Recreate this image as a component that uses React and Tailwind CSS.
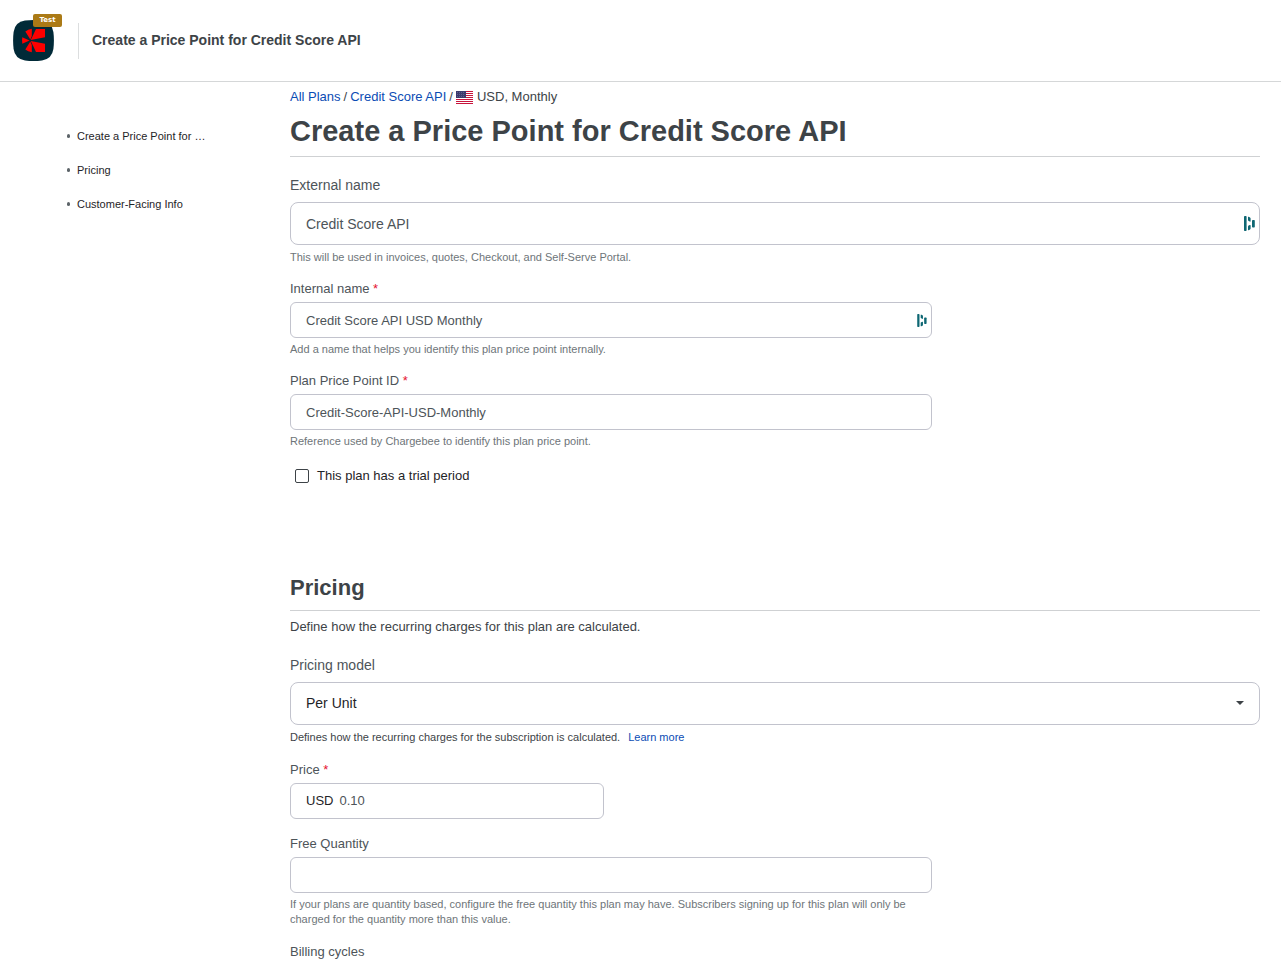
import { useState } from "react";

const NAV_ITEMS = [
  { href: "#details", label: "Create a Price Point for …" },
  { href: "#pricing", label: "Pricing" },
  { href: "#customer-info", label: "Customer-Facing Info" },
];

function Logo() {
  return (
    <svg className="w-[41px] h-[41px]" viewBox="0 0 41 41" aria-hidden="true">
      <path
        d="M12 .6Q20.500-.4 29 .6 39 2 40.400 12 41.400 20.500 40.400 29 39 39 29 40.400 20.500 41.400 12 40.400 2 39 .6 29-.4 20.500.6 12 2 2 12 .6Z"
        fill="#012a38"
      />
      <g fill="#ff0000">
        <path d="M23 9h9v8.300L17.800 20Z" />
        <path d="M23 32h9v-8.300L17.800 21Z" />
        <path d="M18.800 8.800V16L17.300 19.500 12.300 11.500Q15 9.300 18.800 8.800Z" />
        <path d="M18.800 32.200V25L17.300 21.500 12.300 29.500Q15 31.700 18.800 32.200Z" />
        <path d="M16.500 20.500 9.300 17.300Q8.700 20.500 9.300 23.700Z" />
      </g>
    </svg>
  );
}

function UsFlag() {
  return (
    <svg className="w-[17px] h-[13px]" viewBox="0 0 17 13" aria-hidden="true">
      <rect width="17" height="13" fill="#ffffff" />
      {[0, 2, 4, 6, 8, 10, 12].map((y) => (
        <rect key={y} y={y} width="17" height="1" fill="#c8143c" />
      ))}
      <rect width="10" height="7" fill="#3c3b6e" />
      {[1, 3, 5].map((y) =>
        [1, 3, 5, 7].map((x) => (
          <circle key={`${x}-${y}`} cx={x + 0.5} cy={y + 0.5} r="0.4" fill="#8f8fb8" />
        ))
      )}
    </svg>
  );
}

function VaultIcon({ large }) {
  return (
    <svg
      className={large ? "w-[11px] h-[15px]" : "w-[10px] h-[13px]"}
      viewBox="0 0 11 15"
      fill="#0e6773"
      aria-hidden="true"
    >
      <rect x="0" y="0" width="2.600" height="15" rx="0.800" />
      <path d="M4 1.400Q4 .4 4.800.8L6 1.400Q6.600 1.700 6.600 2.400V5Q6.600 6 5.800 5.600L4.600 5Q4 4.700 4 4Z" />
      <path d="M4 10.500Q4 9.800 4.600 9.500L5.800 9Q6.600 8.700 6.600 9.500V12.600Q6.600 13.300 6 13.600L4.800 14.200Q4 14.500 4 13.600Z" />
      <rect x="8" y="4" width="2.800" height="7.500" rx="0.800" />
    </svg>
  );
}

function Label({ htmlFor, large, required, children }) {
  return (
    <label
      htmlFor={htmlFor}
      className={`block leading-5 text-[#4d5459] ${large ? "text-[14px] mb-[7px]" : "text-[13px] mb-[3px]"}`}
    >
      {children}
      {required && <span className="text-[#e5142f]"> *</span>}
    </label>
  );
}

function TextField({ id, label, large, required, value, onChange, help, vault }) {
  return (
    <div className={large ? "" : "max-w-[642px]"}>
      <Label htmlFor={id} large={large} required={required}>
        {label}
      </Label>
      <div className="relative">
        <input
          id={id}
          type="text"
          value={value}
          onChange={(e) => onChange(e.target.value)}
          className={`block w-full border border-[#c2c3cd] bg-white pl-[15px] pr-8 text-[#4d5459] outline-none ${
            large ? "h-[43px] rounded-lg text-[14px]" : "h-9 rounded-md text-[13px]"
          }`}
        />
        {vault && (
          <span className="absolute inset-y-0 right-[5px] flex items-center">
            <VaultIcon large={large} />
          </span>
        )}
      </div>
      {help && (
        <p className={`text-[11px] leading-[15px] text-[#6e7579] ${large ? "mt-[5px]" : "mt-1"}`}>{help}</p>
      )}
    </div>
  );
}

export default function App() {
  const [externalName, setExternalName] = useState("Credit Score API");
  const [internalName, setInternalName] = useState("Credit Score API USD Monthly");
  const [pricePointId, setPricePointId] = useState("Credit-Score-API-USD-Monthly");
  const [hasTrial, setHasTrial] = useState(false);
  const [model, setModel] = useState("per_unit");
  const [price, setPrice] = useState("0.10");
  const [freeQuantity, setFreeQuantity] = useState("");
  const [billingCycles, setBillingCycles] = useState("");

  return (
    <div className="min-h-screen bg-white font-['Liberation_Sans',Arial,sans-serif] text-[13px] text-[#3d4347]">
      <header className="flex items-center border-b border-[#d5d7d8] pl-[13px] h-[82px]">
        <div className="relative">
          <Logo />
          <span className="absolute left-5 -top-1.5 w-[29px] h-[13px] rounded-[2px] bg-[#ab7a16] text-center font-['DejaVu_Sans',sans-serif] text-[7px] leading-3 font-bold text-white">
            Test
          </span>
        </div>
        <div className="ml-6 mr-[13px] h-9 w-px bg-[#dcdedf]" />
        <p className="text-[14px] font-bold">Create a Price Point for Credit Score API</p>
      </header>

      <div className="flex">
        <nav className="w-[290px] shrink-0 pt-11 pl-[67px]">
          <ul className="flex flex-col gap-[14px]">
            {NAV_ITEMS.map((item) => (
              <li key={item.href} className="flex items-center gap-[7px] h-5">
                <span className="w-[3px] h-1 rounded-full bg-[#5d6469]" />
                <a href={item.href} className="text-[11px] leading-5 text-[#1f2427]">
                  {item.label}
                </a>
              </li>
            ))}
          </ul>
        </nav>

        <main className="flex-1 min-w-0 pr-[21px] pt-[5px] pb-10">
          <section id="details">
            <div className="flex items-center leading-5">
              <a href="#plans" className="text-[#0b4cb4]">All Plans</a>
              <span className="mx-[3px]">/</span>
              <a href="#plan" className="text-[#0b4cb4]">Credit Score API</a>
              <span className="mx-[3px]">/</span>
              <UsFlag />
              <span className="ml-1">USD, Monthly</span>
            </div>
            <h1 className="mt-[7px] pb-2 border-b border-[#cfd1d3] text-[29px] leading-[34px] font-bold">
              Create a Price Point for Credit Score API
            </h1>

            <div className="mt-[18px] flex flex-col gap-[14px]">
              <TextField
                id="external-name"
                label="External name"
                large
                value={externalName}
                onChange={setExternalName}
                help="This will be used in invoices, quotes, Checkout, and Self-Serve Portal."
                vault
              />
              <TextField
                id="internal-name"
                label="Internal name"
                required
                value={internalName}
                onChange={setInternalName}
                help="Add a name that helps you identify this plan price point internally."
                vault
              />
              <TextField
                id="price-point-id"
                label="Plan Price Point ID"
                required
                value={pricePointId}
                onChange={setPricePointId}
                help="Reference used by Chargebee to identify this plan price point."
              />
            </div>

            <div className="mt-[17px] ml-[5px] flex items-center gap-2">
              <input
                id="trial"
                type="checkbox"
                checked={hasTrial}
                onChange={(e) => setHasTrial(e.target.checked)}
                className="appearance-none w-[14px] h-[14px] rounded-[2px] border border-[#3d4347] bg-white checked:bg-[#012a38]"
              />
              <label htmlFor="trial" className="leading-5 text-[#1f2427]">
                This plan has a trial period
              </label>
            </div>
          </section>

          <section id="pricing" className="mt-[88px]">
            <h2 className="pb-2 border-b border-[#cfd1d3] text-[22px] leading-7 font-bold">Pricing</h2>
            <p className="mt-1.5 leading-5">Define how the recurring charges for this plan are calculated.</p>

            <div className="mt-[18px] flex flex-col gap-[15px]">
              <div>
                <Label htmlFor="pricing-model" large>
                  Pricing model
                </Label>
                <div className="relative">
                  <select
                    id="pricing-model"
                    value={model}
                    onChange={(e) => setModel(e.target.value)}
                    className="appearance-none block w-full h-[43px] rounded-lg border border-[#c2c3cd] bg-white px-[15px] text-[14px] text-[#1f2427] outline-none"
                  >
                    <option value="per_unit">Per Unit</option>
                  </select>
                  <svg
                    className="absolute right-4 top-[19px] w-2 h-1 pointer-events-none"
                    viewBox="0 0 8 4"
                    aria-hidden="true"
                  >
                    <path d="M0 0h8L4 4Z" fill="#3d4347" />
                  </svg>
                </div>
                <p className="mt-[5px] text-[11px] leading-[15px]">
                  Defines how the recurring charges for the subscription is calculated.
                  <a href="#learn" className="ml-2 text-[#0b4cb4]">Learn more</a>
                </p>
              </div>

              <div className="max-w-[314px]">
                <Label htmlFor="price" required>
                  Price
                </Label>
                <div className="flex items-center h-9 rounded-md border border-[#c2c3cd] bg-white pl-[15px]">
                  <span className="text-[#1f2427]">USD</span>
                  <input
                    id="price"
                    type="text"
                    value={price}
                    onChange={(e) => setPrice(e.target.value)}
                    className="ml-1.5 min-w-0 flex-1 bg-transparent text-[#4d5459] outline-none"
                  />
                </div>
              </div>

              <TextField
                id="free-quantity"
                label="Free Quantity"
                value={freeQuantity}
                onChange={setFreeQuantity}
                help="If your plans are quantity based, configure the free quantity this plan may have. Subscribers signing up for this plan will only be charged for the quantity more than this value."
              />

              <TextField
                id="billing-cycles"
                label="Billing cycles"
                value={billingCycles}
                onChange={setBillingCycles}
              />
            </div>
          </section>
        </main>
      </div>
    </div>
  );
}
